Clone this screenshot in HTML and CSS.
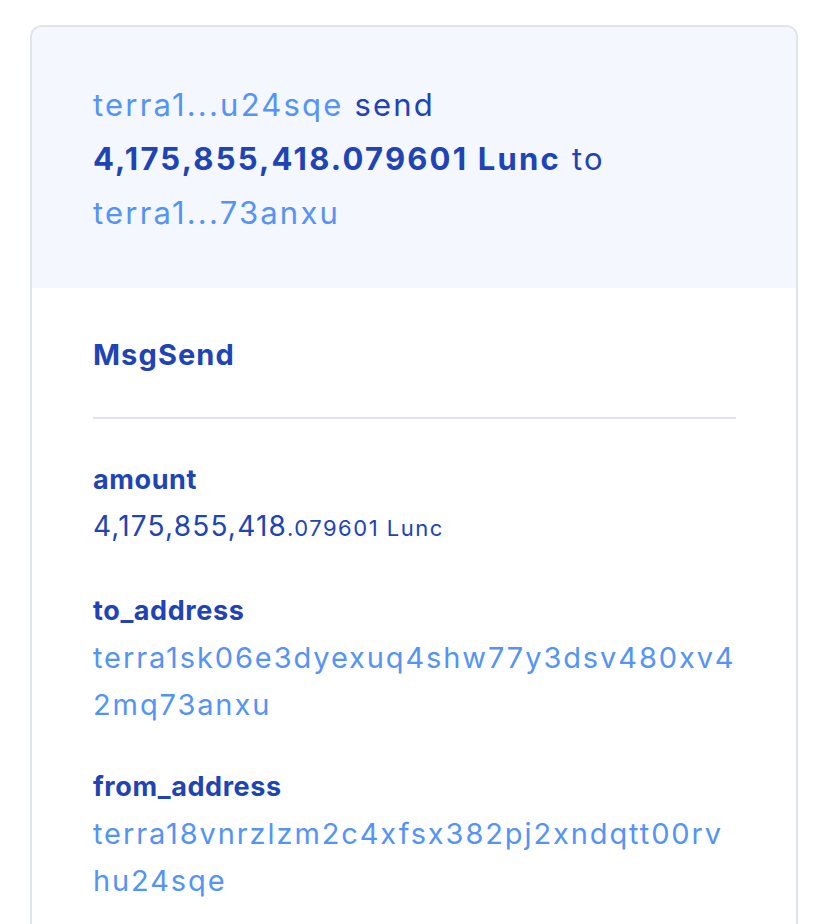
FILE: index.html
```html
<!DOCTYPE html>
<html lang="en">
<head>
<meta charset="utf-8">
<title>MsgSend</title>
<link rel="stylesheet" href="styles.css">
</head>
<body>
  <div class="card">
    <div class="summary">
      <a class="addr">terra1...u24sqe</a> send <strong>4,175,855,418.079601 Lunc</strong> to <a class="addr">terra1...73anxu</a>
    </div>
    <div class="details">
      <div class="msg-type">MsgSend</div>
      <hr class="divider">
      <dl class="fields">
        <div class="field">
          <dt>amount</dt>
          <dd class="amount">4,175,855,418<small>.079601 Lunc</small></dd>
        </div>
        <div class="field">
          <dt>to_address</dt>
          <dd class="link">terra1sk06e3dyexuq4shw77y3dsv480xv42mq73anxu</dd>
        </div>
        <div class="field">
          <dt>from_address</dt>
          <dd class="link">terra18vnrzlzm2c4xfsx382pj2xndqtt00rvhu24sqe</dd>
        </div>
      </dl>
    </div>
  </div>
</body>
</html>
```
FILE: styles.css
```css
html, body {
  margin: 0;
  padding: 0;
  background: #ffffff;
}

body {
  font-family: Inter, "Noto Sans", sans-serif;
  color: #2043b5;
}

.card {
  margin: 25px 0 0 30px;
  width: 768px;
  box-sizing: border-box;
  border: 2px solid #e0e4ee;
  border-bottom: none;
  border-radius: 12px 12px 0 0;
  overflow: hidden;
}

.summary {
  background: #f4f7fd;
  padding: 51px 61px 48px 61px;
  font-size: 31px;
  line-height: 54px;
  letter-spacing: 2.2px;
  color: #2043b5;
}

.summary strong {
  font-weight: 700;
}

.summary .addr {
  color: #5493f7;
  text-decoration: none;
}

.details {
  background: #ffffff;
  padding: 43px 60px 80px 61px;
}

.msg-type {
  font-size: 29px;
  font-weight: 700;
  line-height: 47px;
  letter-spacing: 1.1px;
}

.divider {
  border: none;
  height: 2px;
  background: #dfe2ea;
  margin: 39px 0 37px 0;
}

.fields {
  margin: 0;
  display: flex;
  flex-direction: column;
  gap: 35px;
}

.field dt {
  font-size: 27px;
  font-weight: 700;
  line-height: 47px;
  letter-spacing: 0.6px;
}

.field dd {
  margin: 0;
  font-size: 29px;
  line-height: 47px;
  letter-spacing: 1.9px;
}

.field dd.amount {
  font-size: 28px;
  letter-spacing: 1.2px;
}

.amount small {
  font-size: 22px;
  letter-spacing: 1.5px;
}

.link {
  color: #5493f7;
  word-break: break-all;
}
```
